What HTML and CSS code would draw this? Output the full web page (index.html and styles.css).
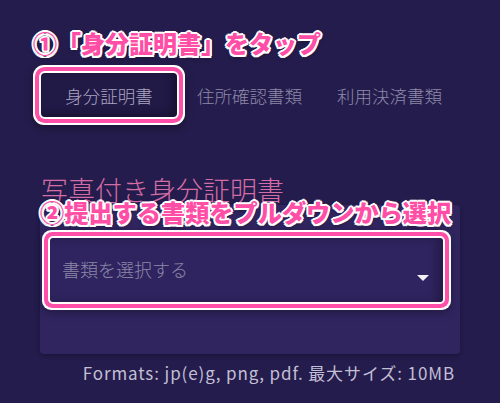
FILE: index.html
```html
<!DOCTYPE html>
<html lang="ja">
<head>
    <meta charset="UTF-8">
    <meta name="viewport" content="width=device-width, initial-scale=1.0">
    <title>本人確認書類のアップロード</title>
    <link rel="stylesheet" href="styles.css">
</head>
<body>

<div class="page">
    <p class="callout callout-tab">①「身分証明書」をタップ</p>

    <div class="tabs">
        <button class="tab active">身分証明書</button>
        <button class="tab">住所確認書類</button>
        <button class="tab">利用決済書類</button>
    </div>

    <h2 class="doc-title">写真付き身分証明書</h2>

    <p class="callout callout-select">②提出する書類をプルダウンから選択</p>

    <div class="card">
        <div class="select">
            <span class="placeholder">書類を選択する</span>
            <span class="arrow"></span>
        </div>
    </div>

    <p class="formats">Formats: jp(e)g, png, pdf. 最大サイズ: 10MB</p>
</div>

</body>
</html>
```

FILE: styles.css
```css
body {
    margin: 0;
    background-color: #241c4c;
    font-family: "Noto Sans CJK JP", "Noto Sans", sans-serif;
}
.page {
    position: relative;
    width: 460px;
    height: 403px;
    padding: 73px 0 0 40px;
    box-sizing: border-box;
}

/* pink annotation labels */
.callout {
    position: absolute;
    margin: 0;
    color: #ff4ea6;
    font-weight: 900;
    font-size: 24px;
    line-height: 28px;
    white-space: nowrap;
    text-shadow:
        2px 0 0 #fff, -2px 0 0 #fff, 0 2px 0 #fff, 0 -2px 0 #fff,
        1.5px 1.5px 0 #fff, -1.5px 1.5px 0 #fff, 1.5px -1.5px 0 #fff, -1.5px -1.5px 0 #fff,
        0 3px 4px rgba(0, 0, 0, 0.35);
    z-index: 2;
}
.callout-tab {
    top: 29px;
    left: 33px;
}
.callout-select {
    top: 198px;
    left: 40px;
    font-size: 24.2px;
}

.tabs {
    display: flex;
    align-items: center;
    height: 44px;
}
.tab {
    background: none;
    border: none;
    padding: 0;
    font-family: inherit;
    font-size: 17.5px;
    font-weight: 300;
    white-space: nowrap;
    color: #8e89a9;
    margin-left: 35px;
}
.tab.active {
    width: 136px;
    height: 44px;
    margin: 0 20px 0 1px;
    color: #aca7c3;
    background-color: #211946;
    border-radius: 4px;
    box-shadow:
        inset -5px -3px 8px rgba(0, 0, 0, 0.3),
        0 0 0 2px #fff,
        0 0 0 6px #ff4fa8,
        0 0 0 8px #fff,
        0 3px 8px 8px rgba(0, 0, 0, 0.3);
}
.tab.active + .tab {
    margin-left: 0;
}

.doc-title {
    margin: 55px 0 0 1px;
    font-size: 27px;
    font-weight: 200;
    line-height: 36px;
    color: #d46ca6;
}

.card {
    margin-top: -3px;
    height: 149px;
    background-color: #30255f;
    border-radius: 4px;
    padding: 33px 17px 0 10px;
    box-sizing: border-box;
    box-shadow: 0 2px 4px rgba(0, 0, 0, 0.25);
}
.select {
    position: relative;
    height: 64px;
    display: flex;
    align-items: center;
    padding: 0 0 2px 12px;
    box-sizing: border-box;
    background-color: #2f245f;
    border-radius: 3px;
    box-shadow:
        inset -6px 0 8px rgba(0, 0, 0, 0.25),
        0 0 0 2px #fff,
        0 0 0 6px #ff4fa8,
        0 0 0 8px #fff,
        0 3px 8px 8px rgba(0, 0, 0, 0.3);
}
.placeholder {
    font-size: 18px;
    font-weight: 300;
    color: #8d88a8;
}
.arrow {
    position: absolute;
    right: 14px;
    top: 37px;
    width: 0;
    height: 0;
    border-left: 6px solid transparent;
    border-right: 6px solid transparent;
    border-top: 6px solid #f2f0f7;
}

.formats {
    margin: 6px 0 0;
    text-align: right;
    padding-right: 5px;
    font-size: 17px;
    letter-spacing: 0.9px;
    color: #c3bfd5;
}
```
